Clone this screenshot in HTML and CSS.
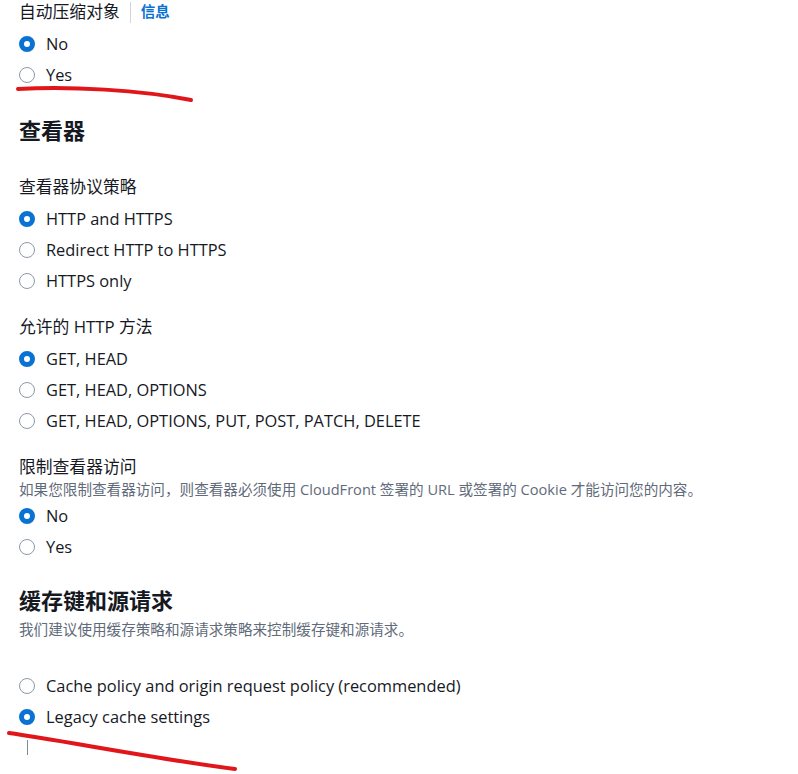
FILE: index.html
```html
<!DOCTYPE html>
<html lang="zh">
<head>
<meta charset="utf-8">
<link rel="stylesheet" href="styles.css">
</head>
<body>
<div class="page">
  <div class="label first"><span>自动压缩对象</span><span class="sep"></span><a class="info">信息</a></div>
  <div class="radio checked"><span class="dot"></span><span class="txt">No</span></div>
  <div class="radio"><span class="dot"></span><span class="txt">Yes</span></div>

  <h2 class="heading">查看器</h2>
  <div class="label after-heading">查看器协议策略</div>
  <div class="radio checked"><span class="dot"></span><span class="txt">HTTP and HTTPS</span></div>
  <div class="radio"><span class="dot"></span><span class="txt">Redirect HTTP to HTTPS</span></div>
  <div class="radio"><span class="dot"></span><span class="txt">HTTPS only</span></div>

  <div class="label group">允许的 HTTP 方法</div>
  <div class="radio checked"><span class="dot"></span><span class="txt">GET, HEAD</span></div>
  <div class="radio"><span class="dot"></span><span class="txt">GET, HEAD, OPTIONS</span></div>
  <div class="radio"><span class="dot"></span><span class="txt">GET, HEAD, OPTIONS, PUT, POST, PATCH, DELETE</span></div>

  <div class="label group tight">限制查看器访问</div>
  <div class="desc">如果您限制查看器访问，则查看器必须使用 CloudFront 签署的 URL 或签署的 Cookie 才能访问您的内容。</div>
  <div class="radio checked after-desc"><span class="dot"></span><span class="txt">No</span></div>
  <div class="radio"><span class="dot"></span><span class="txt">Yes</span></div>

  <h2 class="heading second">缓存键和源请求</h2>
  <div class="desc under-heading">我们建议使用缓存策略和源请求策略来控制缓存键和源请求。</div>
  <div class="radio spaced"><span class="dot"></span><span class="txt">Cache policy and origin request policy (recommended)</span></div>
  <div class="radio checked"><span class="dot"></span><span class="txt">Legacy cache settings</span></div>
  <div class="bar"></div>
</div>
<svg class="marks" width="798" height="774" viewBox="0 0 798 774">
  <path d="M18 89 C 70 86, 140 90, 191 100" />
  <path d="M9 733 C 60 740, 150 758, 235 769" />
</svg>
</body>
</html>
```
FILE: styles.css
```css
html, body {
  margin: 0;
  padding: 0;
  background: #ffffff;
}
body {
  font-family: "Open Sans", "Noto Sans", "Noto Sans CJK SC", sans-serif;
  color: #16191f;
  font-size: 16.8px;
  position: relative;
  width: 798px;
  height: 774px;
  overflow: hidden;
}
.page {
  padding: 0 19px;
  display: flex;
  flex-direction: column;
}
.label {
  height: 24px;
  line-height: 24px;
  margin-bottom: 4px;
  display: flex;
  align-items: center;
  white-space: nowrap;
}
.label.after-heading { margin-top: 30px; }
.label.group { margin-top: 19px; }
.label.tight { margin-bottom: 0; }
.sep {
  width: 1px;
  height: 21px;
  background: #d1d5db;
  margin: 0 10px 0 10px;
}
.info {
  color: #0972d3;
  font-weight: 700;
  font-size: 14.5px;
}
.radio {
  height: 31px;
  display: flex;
  align-items: center;
  gap: 11px;
  white-space: nowrap;
}
.txt {
  font-size: 16.4px;
}
.dot {
  width: 16px;
  height: 16px;
  box-sizing: border-box;
  border-radius: 50%;
  border: 1.5px solid #8d99a8;
  background: #fff;
  flex: none;
}
.radio.checked .dot {
  border: 5px solid #0972d3;
}
.heading {
  margin: 25px 0 0 0;
  height: 30px;
  line-height: 30px;
  font-size: 22px;
  font-weight: 700;
  color: #16191f;
}
.heading.second { margin-top: 23px; }
.desc {
  font-size: 14.6px;
  line-height: 20px;
  height: 20px;
  color: #5f6b7a;
  white-space: nowrap;
}
.radio.after-desc { margin-top: 1px; }
.desc.under-heading { margin-top: 4px; }
.radio.spaced { margin-top: 31px; }
.bar {
  width: 1px;
  height: 15px;
  background: #7d8998;
  margin: 8px 0 0 8px;
}
.marks {
  position: absolute;
  left: 0;
  top: 0;
  pointer-events: none;
}
.marks path {
  fill: none;
  stroke: #e0161b;
  stroke-width: 4;
  stroke-linecap: round;
}
```
